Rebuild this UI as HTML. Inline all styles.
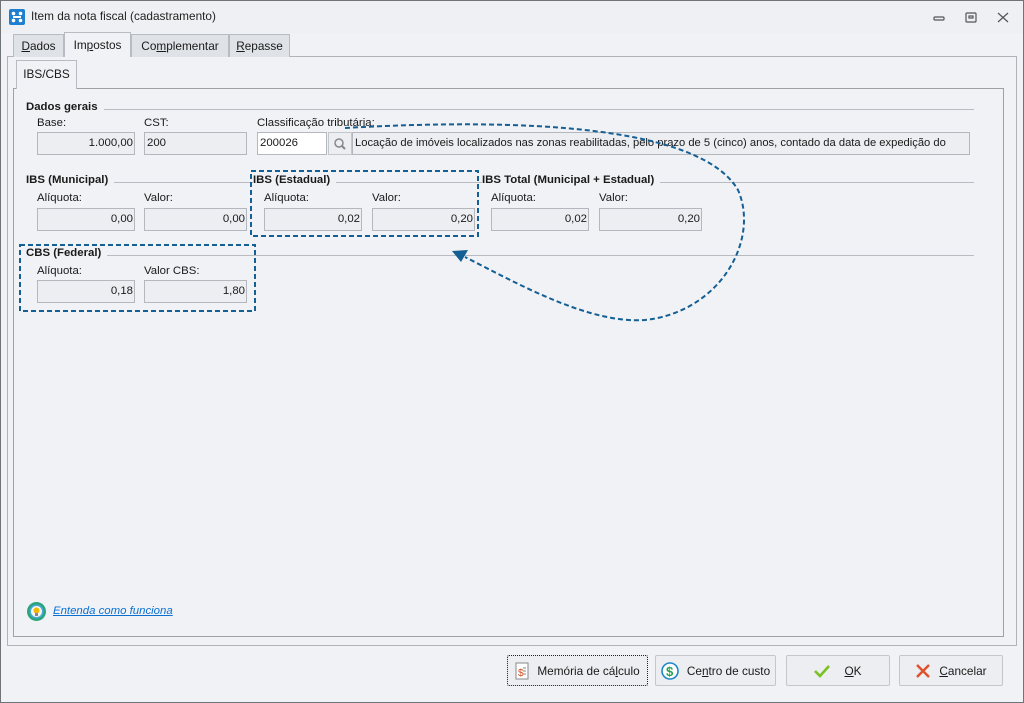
<!DOCTYPE html>
<html><head><meta charset="utf-8"><style>
*{box-sizing:border-box;margin:0;padding:0}
body{width:1024px;height:703px;overflow:hidden;background:#f0f2f6;font-family:"Liberation Sans",sans-serif;font-size:11.4px;color:#1a1a1a;position:relative}
.a{position:absolute;white-space:nowrap}
.win{left:0;top:0;width:1024px;height:703px;border:1px solid #6f7478;background:#f0f2f6}
.title{left:1px;top:1px;width:1022px;height:32px;background:#eef0f3}
.tab{top:34px;height:23px;border:1px solid #b8bcc2;border-bottom:none;background:#dfe2e6;padding:4px 0 0;text-align:center;font-size:11.8px}
.tab.sel{background:#f0f2f6;top:32px;height:25px}
.panel{border:1px solid #9ea2a7}
.f{height:23px;border:1px solid #b4b8be;background:#eceef2;padding:4px 1px 0 2px;overflow:hidden}
.r{text-align:right}
.h{font-weight:bold;background:#f0f2f6;padding-right:6px}
.line{height:1px;background:#b8bcc2}
.btn{top:655px;height:31px;border:1px solid #c3c6ca;border-radius:2px;background:#eceef1;font-size:11.8px;display:flex;align-items:center;justify-content:center;gap:8px}
</style></head><body>
<div class="a win"></div>
<div class="a title"></div>
<svg class="a" style="left:9px;top:9px" width="16" height="16"><rect width="16" height="16" rx="2" fill="#1e7fd0"/><g fill="#fff"><circle cx="4.5" cy="4.5" r="1.8"/><circle cx="11.5" cy="4.5" r="1.8"/><circle cx="4.5" cy="11.5" r="1.8"/><circle cx="11.5" cy="11.5" r="1.8"/><rect x="4" y="7" width="8" height="2"/></g></svg>
<div class="a" style="left:31px;top:9px;font-size:11.8px;color:#222">Item da nota fiscal (cadastramento)</div>
<svg class="a" style="left:930px;top:10px" width="90" height="16" stroke="#555" fill="none" stroke-width="1.2"><rect x="4" y="7" width="10" height="3" rx="1"/><rect x="36" y="3" width="10" height="9" rx="1"/><rect x="39" y="6" width="4" height="2"/><path d="M68 3l10 9M78 3l-10 9"/></svg>
<div class="a panel" style="left:7px;top:56px;width:1010px;height:590px;border-color:#b0b4b9"></div>
<div class="a tab" style="left:13px;width:51px"><u>D</u>ados</div>
<div class="a tab sel" style="left:64px;width:67px;padding-top:5px">Im<u>p</u>ostos</div>
<div class="a tab" style="left:131px;width:98px">Co<u>m</u>plementar</div>
<div class="a tab" style="left:229px;width:61px"><u>R</u>epasse</div>
<div class="a" style="left:16px;top:60px;width:61px;height:29px;border:1px solid #b8bcc2;border-bottom:none;background:#f0f2f6;padding:6px 0 0;text-align:center;font-size:11.8px;z-index:2">IBS/CBS</div>
<div class="a panel" style="left:13px;top:88px;width:991px;height:549px"></div>

<div class="a line" style="left:26px;top:109px;width:948px"></div>
<div class="a h" style="left:26px;top:101px">Dados gerais</div>
<div class="a" style="left:37px;top:117px">Base:</div>
<div class="a" style="left:144px;top:117px">CST:</div>
<div class="a" style="left:257px;top:117px">Classificação tributária:</div>
<div class="a f r" style="left:37px;top:132px;width:98px">1.000,00</div>
<div class="a f" style="left:144px;top:132px;width:103px">200</div>
<div class="a f" style="left:257px;top:132px;width:70px;background:#fff">200026</div>
<div class="a" style="left:328px;top:132px;width:24px;height:23px;border:1px solid #c3c6ca;background:#eceef1"><svg width="22" height="21"><circle cx="10" cy="10" r="4" fill="none" stroke="#888" stroke-width="1.5"/><path d="M13 13l3 3" stroke="#888" stroke-width="2"/></svg></div>
<div class="a f" style="left:352px;top:132px;width:618px;font-size:11.2px">Locação de imóveis localizados nas zonas reabilitadas, pelo prazo de 5 (cinco) anos, contado da data de expedição do</div>

<div class="a line" style="left:26px;top:182px;width:948px"></div>
<div class="a h" style="left:26px;top:174px">IBS (Municipal)</div>
<div class="a h" style="left:253px;top:174px">IBS (Estadual)</div>
<div class="a h" style="left:482px;top:174px">IBS Total (Municipal + Estadual)</div>
<div class="a" style="left:37px;top:192px">Alíquota:</div>
<div class="a" style="left:144px;top:192px">Valor:</div>
<div class="a" style="left:264px;top:192px">Alíquota:</div>
<div class="a" style="left:372px;top:192px">Valor:</div>
<div class="a" style="left:491px;top:192px">Alíquota:</div>
<div class="a" style="left:599px;top:192px">Valor:</div>
<div class="a f r" style="left:37px;top:208px;width:98px">0,00</div>
<div class="a f r" style="left:144px;top:208px;width:103px">0,00</div>
<div class="a f r" style="left:264px;top:208px;width:98px">0,02</div>
<div class="a f r" style="left:372px;top:208px;width:103px">0,20</div>
<div class="a f r" style="left:491px;top:208px;width:98px">0,02</div>
<div class="a f r" style="left:599px;top:208px;width:103px">0,20</div>

<div class="a line" style="left:26px;top:255px;width:948px"></div>
<div class="a h" style="left:26px;top:247px">CBS (Federal)</div>
<div class="a" style="left:37px;top:265px">Alíquota:</div>
<div class="a" style="left:144px;top:265px">Valor CBS:</div>
<div class="a f r" style="left:37px;top:280px;width:98px">0,18</div>
<div class="a f r" style="left:144px;top:280px;width:103px">1,80</div>

<svg class="a" style="left:0;top:0" width="1024" height="703" fill="none" stroke="#145f93" stroke-width="2" stroke-dasharray="5,3">
<rect x="251" y="171" width="227" height="65"/>
<rect x="20" y="245" width="235" height="66"/>
<path d="M345 128 C520 118 700 125 738 190 C760 240 720 312 645 320 C590 324 520 285 465 257"/>
<path d="M452 251 L468 250 L461 262 Z" fill="#145f93" stroke="none"/>
</svg>

<svg class="a" style="left:26px;top:601px" width="21" height="21"><circle cx="10.5" cy="10.5" r="9.5" fill="#2aa57a"/><circle cx="10.5" cy="10.5" r="7" fill="#4aa8d8"/><circle cx="10.5" cy="10.5" r="5.5" fill="#f4f4f4"/><circle cx="10.5" cy="9.5" r="3" fill="#f2b800"/><rect x="9" y="12" width="3" height="3" fill="#888"/></svg>
<div class="a" style="left:53px;top:605px;color:#0b6fd0;font-style:italic;text-decoration:underline">Entenda como funciona</div>

<div class="a btn" style="left:507px;width:141px;border:1px dotted #222"><svg width="14" height="18"><rect x="1" y="1" width="12" height="16" fill="#fff" stroke="#888"/><text x="3" y="14" font-size="10" fill="#d24a1a" font-family="Liberation Sans">$</text><path d="M8 6h3M8 9h3M8 12h3" stroke="#888"/></svg><span>Memória de cá<u>l</u>culo</span></div>
<div class="a btn" style="left:655px;width:121px"><svg width="18" height="18"><circle cx="9" cy="9" r="8" fill="#fff" stroke="#1e88c8" stroke-width="1.6"/><text x="5" y="14" font-size="13" font-weight="bold" fill="#2aa050" font-family="Liberation Sans">$</text></svg><span>Ce<u>n</u>tro de custo</span></div>
<div class="a btn" style="left:786px;width:104px"><svg width="16" height="14"><path d="M1 7l5 5 9-10" stroke="#7cc020" stroke-width="2.6" fill="none"/></svg><span style="margin-left:6px"><u>O</u>K</span></div>
<div class="a btn" style="left:899px;width:104px"><svg width="16" height="16"><path d="M2 2l12 12M14 2L2 14" stroke="#e0502a" stroke-width="2.4"/></svg><span><u>C</u>ancelar</span></div>
</body></html>
